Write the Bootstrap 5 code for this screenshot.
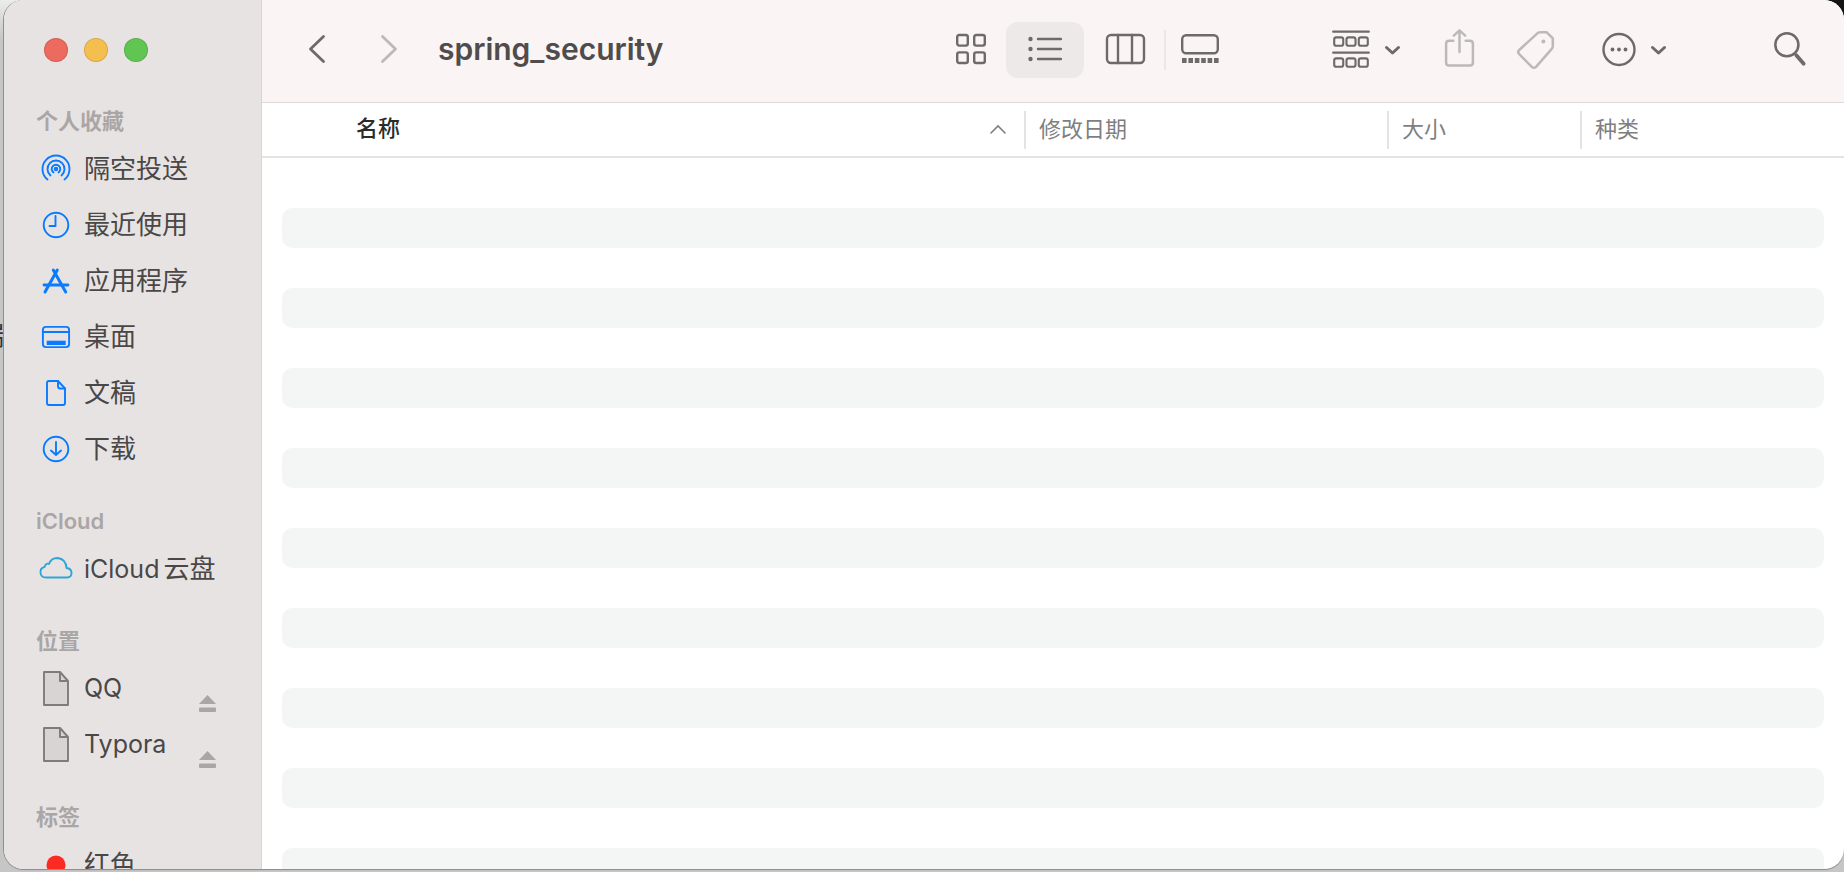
<!DOCTYPE html>
<html lang="zh-CN">
<head>
  <meta charset="UTF-8">
  <title>spring_security</title>
  <link href="https://cdn.jsdelivr.net/npm/bootstrap@5.3.0/dist/css/bootstrap.min.css" rel="stylesheet">
  <style>
    html, body { height: 100%; }
    body {
      overflow: hidden;
      background: linear-gradient(#ececec, #c6c6c6 40px);
      font-family: Inter, "Noto Sans CJK SC", sans-serif;
      position: relative;
    }
    .peek-corner { position: absolute; top: 0; right: 0; width: 30px; height: 30px; background: #141414; }
    .peek-text { position: absolute; top: 320px; left: -22px; font-size: 26px; line-height: 32px; color: #333; }
    .finder {
      position: relative;
      margin-left: 4px;
      height: 869px;
      border-radius: 20px;
      background: #fff;
      box-shadow: -1px 0 0 #8f8f8f, 0 1px 1px #8a8a8a;
    }
    .side-pane {
      width: 258px;
      flex: none;
      padding: 0 45px 0 32px;
      background: #e8e3e3;
      border-right: 1px solid #d9d5d5;
    }
    .lights { height: 103px; padding: 0 0 3px 8px; gap: 16px; }
    .light { width: 24px; height: 24px; border-radius: 50%; border: 1px solid rgba(0, 0, 0, .12); }
    .light-red { background: #ed6a5e; }
    .light-yellow { background: #f5bf4f; }
    .light-green { background: #61c554; }
    .side-title { height: 38px; line-height: 37px; font-size: 22px; font-weight: 600; color: #aba6a6; }
    .side-title-next { margin-top: 26px; }
    .side-item { height: 56px; gap: 8px; font-size: 26px; color: #4a4747; white-space: nowrap; }
    .side-item svg { flex: none; }
    .side-item > span { margin-top: -2px; }
    .side-item > .side-latin { font-size: 25px; margin-top: -1px; }
    .cjk-gap { margin-left: 4px; font-size: 26px; }
    .eject { margin-bottom: 5px; }
    .ic-blue { fill: none; stroke: #0a7bff; stroke-width: 1.9; stroke-linecap: round; stroke-linejoin: round; }
    .ic-blue-fill { fill: #0a7bff; }
    .ic-cloud { fill: none; stroke: #2fa6d8; stroke-width: 1.9; stroke-linejoin: round; }
    .ic-file { fill: #d9d4d4; stroke: #7f7b7b; stroke-width: 1.9; stroke-linejoin: round; }
    .tool-bar { height: 103px; padding: 0 37px 2px 45px; background: #faf4f4; border-bottom: 1px solid #dedada; }
    .tool-bar svg { flex: none; display: block; }
    .ic-tool { fill: none; stroke: #6e6a6a; stroke-width: 2.4; stroke-linecap: round; stroke-linejoin: round; }
    .ic-off { stroke: #bdb9b9; }
    .ic-solid { fill: #6e6a6a; stroke: none; }
    .sw-thin { stroke-width: 2; }
    .sw-mid { stroke-width: 2.8; }
    .sw-thick { stroke-width: 3; }
    .sw-bold { stroke-width: 3.6; }
    .m-forward { margin-left: 52px; }
    .path-name { margin-left: 39px; font-size: 30px; font-weight: 600; color: #504c4c; line-height: 36px; margin-top: -2px; }
    .view-on { width: 78px; height: 56px; margin-left: 18px; border-radius: 12px; background: #eee9e9; }
    .m-columns { margin-left: 20px; }
    .v-rule { width: 2px; height: 40px; margin-left: 17px; background: #ece7e7; }
    .m-gallery { margin-left: 14px; }
    .m-group { margin-left: 111px; }
    .m-chev { margin-left: 12px; }
    .m-share { margin-left: 41px; }
    .m-tag { margin-left: 39px; }
    .m-more { margin-left: 45px; }
    .m-chev2 { margin-left: 12px; }
    .m-search { margin-left: 104px; }
    .col-bar { height: 55px; border-bottom: 2px solid #e3e3e3; font-size: 22px; color: #7f7f7f; }
    .col-name { width: 762px; padding: 0 18px 0 94px; font-weight: 500; color: #2b2b2b; margin-top: -2px; }
    .col-cell { height: 38px; line-height: 36px; padding-left: 13px; border-left: 2px solid #e3e3e3; }
    .col-date { width: 363px; }
    .col-size { width: 193px; }
    .row-list { padding: 50px 20px 0; gap: 40px; }
    .row-ghost { height: 40px; flex: none; border-radius: 10px; background: #f4f5f5; }
  </style>
</head>
<body>
  <div class="peek-corner"></div>
  <div class="peek-text">端</div>

  <div class="finder d-flex overflow-hidden">
    <!-- sidebar -->
    <aside class="side-pane">
      <div class="lights d-flex align-items-center">
        <div class="light light-red"></div>
        <div class="light light-yellow"></div>
        <div class="light light-green"></div>
      </div>

      <div class="side-title">个人收藏</div>
      <div class="side-item d-flex align-items-center">
        <svg width="40" height="40" viewBox="0 0 40 40" class="ic-blue"><path d="M11.5 30.5A13.5 13.5 0 1 1 28.5 30.5"/><path d="M14.5 26.5A8.5 8.5 0 1 1 25.5 26.5"/><path d="M17.5 23.5A4.3 4.3 0 1 1 22.5 23.5"/><circle cx="20" cy="20" r="1.3"/></svg>
        <span>隔空投送</span>
      </div>
      <div class="side-item d-flex align-items-center">
        <svg width="40" height="40" viewBox="0 0 40 40" class="ic-blue"><circle cx="20" cy="20" r="12.3"/><path d="M19.5 11V21H13.5"/></svg>
        <span>最近使用</span>
      </div>
      <div class="side-item d-flex align-items-center">
        <svg width="40" height="40" viewBox="0 0 40 40" class="ic-blue"><path stroke-width="3" d="M21.3 9 9 31M17.3 9 29.7 31"/><path stroke-width="2.8" d="M8 24H32"/></svg>
        <span>应用程序</span>
      </div>
      <div class="side-item d-flex align-items-center">
        <svg width="40" height="40" viewBox="0 0 40 40" class="ic-blue"><rect x="6.9" y="9.9" width="26.2" height="20.2" rx="3"/><path d="M7 15H33"/><rect x="10.7" y="23.7" width="19" height="4.3" class="ic-blue-fill" stroke="none"/></svg>
        <span>桌面</span>
      </div>
      <div class="side-item d-flex align-items-center">
        <svg width="40" height="40" viewBox="0 0 40 40" class="ic-blue"><path d="M11 10Q11 8 13 8H22L29 15.5V30Q29 32 27 32H13Q11 32 11 30Z"/><path d="M22 8V13Q22 15.5 24 15.5H29"/></svg>
        <span>文稿</span>
      </div>
      <div class="side-item d-flex align-items-center">
        <svg width="40" height="40" viewBox="0 0 40 40" class="ic-blue"><circle cx="20" cy="20" r="12.3"/><path d="M20 13V26M15 21.5 20 26 25 21.5"/></svg>
        <span>下载</span>
      </div>

      <div class="side-title side-title-next">iCloud</div>
      <div class="side-item d-flex align-items-center">
        <svg width="40" height="40" viewBox="0 0 40 40" class="ic-cloud"><path d="M10 28.5H31Q35.5 28.5 35.5 24Q35.5 19.5 30.5 19Q30 10 21.5 9Q15 9 13 15Q10 13.5 8.5 18Q4 19 4.5 24Q5 28.5 10 28.5Z"/></svg>
        <span class="side-latin">iCloud<span class="cjk-gap">云盘</span></span>
      </div>

      <div class="side-title side-title-next">位置</div>
      <div class="side-item d-flex align-items-center">
        <svg width="40" height="40" viewBox="0 0 40 40" class="ic-file"><path d="M8 3H24L32 12V36H8Z"/><path d="M24 3V12H32" fill="none"/></svg>
        <span class="side-latin">QQ</span>
        <svg class="eject ms-auto align-self-end" width="17" height="17" viewBox="0 0 17 17" fill="#aba6a6"><path d="M8.5 0 17 9H0Z"/><rect y="12.5" width="17" height="4.5" rx="1"/></svg>
      </div>
      <div class="side-item d-flex align-items-center">
        <svg width="40" height="40" viewBox="0 0 40 40" class="ic-file"><path d="M8 3H24L32 12V36H8Z"/><path d="M24 3V12H32" fill="none"/></svg>
        <span class="side-latin">Typora</span>
        <svg class="eject ms-auto align-self-end" width="17" height="17" viewBox="0 0 17 17" fill="#aba6a6"><path d="M8.5 0 17 9H0Z"/><rect y="12.5" width="17" height="4.5" rx="1"/></svg>
      </div>

      <div class="side-title side-title-next">标签</div>
      <div class="side-item d-flex align-items-center">
        <svg width="40" height="40" viewBox="0 0 40 40"><circle cx="20" cy="20" r="9.5" fill="#fb2a22"/></svg>
        <span>红色</span>
      </div>
    </aside>

    <main class="flex-grow-1 d-flex flex-column overflow-hidden">
      <!-- toolbar -->
      <div class="tool-bar d-flex align-items-center flex-shrink-0">
        <svg width="20" height="40" viewBox="0 0 20 40"><path class="ic-tool sw-mid" d="M16.5 6.5 3.5 19 16.5 31.5"/></svg>
        <svg class="m-forward" width="20" height="40" viewBox="0 0 20 40"><path class="ic-tool ic-off sw-mid" d="M3.5 6.5 16.5 19 3.5 31.5"/></svg>
        <div class="path-name">spring_security</div>

        <svg class="ms-auto" width="34" height="40" viewBox="0 0 34 40"><g class="ic-tool"><rect x="3.2" y="5" width="10.6" height="10.6" rx="2"/><rect x="20.2" y="5" width="10.6" height="10.6" rx="2"/><rect x="3.2" y="22.4" width="10.6" height="10.6" rx="2"/><rect x="20.2" y="22.4" width="10.6" height="10.6" rx="2"/></g></svg>
        <div class="view-on d-flex align-items-center justify-content-center">
          <svg width="34" height="40" viewBox="0 0 34 40"><g class="ic-solid"><circle cx="2.5" cy="9" r="2.2"/><circle cx="2.5" cy="19" r="2.2"/><circle cx="2.5" cy="29" r="2.2"/></g><path class="ic-tool" d="M10 9H33M10 19H33M10 29H33"/></svg>
        </div>
        <svg class="m-columns" width="43" height="40" viewBox="0 0 43 40"><g class="ic-tool"><rect x="3" y="5" width="37" height="28" rx="4"/><path d="M14 5V33M28 5V33"/></g></svg>
        <div class="v-rule"></div>
        <svg class="m-gallery" width="40" height="40" viewBox="0 0 40 40"><rect class="ic-tool" x="2.2" y="5.2" width="35.6" height="18" rx="4"/><g class="ic-solid"><rect x="2" y="28" width="4.6" height="5"/><rect x="8.4" y="28" width="4.6" height="5"/><rect x="14.8" y="28" width="4.6" height="5"/><rect x="21.2" y="28" width="4.6" height="5"/><rect x="27.6" y="28" width="4.6" height="5"/><rect x="34" y="28" width="4.6" height="5"/></g></svg>

        <svg class="m-group" width="40" height="42" viewBox="0 0 38 40"><g class="ic-tool sw-thin"><path d="M2 2.5H36M2 22.5H36"/><rect x="3" y="8" width="8.6" height="8" rx="2"/><rect x="14.7" y="8" width="8.6" height="8" rx="2"/><rect x="26.4" y="8" width="8.6" height="8" rx="2"/><rect x="3" y="28" width="8.6" height="8" rx="2"/><rect x="14.7" y="28" width="8.6" height="8" rx="2"/><rect x="26.4" y="28" width="8.6" height="8" rx="2"/></g></svg>
        <svg class="m-chev" width="19" height="40" viewBox="0 0 19 40"><path class="ic-tool sw-thick" d="M3.5 17.5 9.5 23 15.5 17.5"/></svg>
        <svg class="m-share" width="33" height="42" viewBox="0 0 32 40"><g class="ic-tool ic-off"><path d="M10 11H6Q3 11 3 14V32Q3 35 6 35H26Q29 35 29 32V14Q29 11 26 11H22"/><path d="M16 22V1M10.5 6 16 1 21.5 6"/></g></svg>
        <svg class="m-tag" width="41" height="42" viewBox="0 0 39 40"><g class="ic-tool ic-off"><path d="M4 20 22 3.5Q23 3 25 3H30L36 9V16Q36 18 35 19L20 36Q18 38 16 36L4 24Q2 22 4 20Z"/></g><circle cx="27" cy="12" r="1.9" fill="#bdb9b9"/></svg>
        <svg class="m-more" width="36" height="40" viewBox="0 0 36 40"><circle class="ic-tool" cx="18" cy="19.5" r="15.5"/><g class="ic-solid"><circle cx="11.5" cy="19.5" r="1.9"/><circle cx="18" cy="19.5" r="1.9"/><circle cx="24.5" cy="19.5" r="1.9"/></g></svg>
        <svg class="m-chev2" width="19" height="40" viewBox="0 0 19 40"><path class="ic-tool sw-thick" d="M3.5 17.5 9.5 23 15.5 17.5"/></svg>
        <svg class="m-search" width="35" height="42" viewBox="0 0 33 40"><circle class="ic-tool" cx="14" cy="15" r="11"/><path class="ic-tool sw-bold" d="M23 25 30 33"/></svg>
      </div>

      <!-- column header -->
      <div class="col-bar d-flex align-items-center flex-shrink-0">
        <div class="col-name d-flex align-items-center">
          <span>名称</span>
          <svg class="ms-auto" width="16" height="10" viewBox="0 0 16 10" fill="none" stroke="#7f7f7f" stroke-width="1.6" stroke-linecap="round"><path d="M1 9 8 2 15 9"/></svg>
        </div>
        <div class="col-cell col-date">修改日期</div>
        <div class="col-cell col-size">大小</div>
        <div class="col-cell">种类</div>
      </div>

      <!-- loading rows -->
      <div class="row-list d-flex flex-column flex-grow-1 overflow-hidden" id="filas"></div>
    </main>
  </div>

  <script>
    const filas = document.getElementById('filas');
    for (let i = 0; i < 9; i++) {
      const fila = document.createElement('div');
      fila.className = 'row-ghost';
      filas.appendChild(fila);
    }
  </script>
  <script src="https://cdn.jsdelivr.net/npm/bootstrap@5.3.0/dist/js/bootstrap.bundle.min.js"></script>
</body>
</html>
